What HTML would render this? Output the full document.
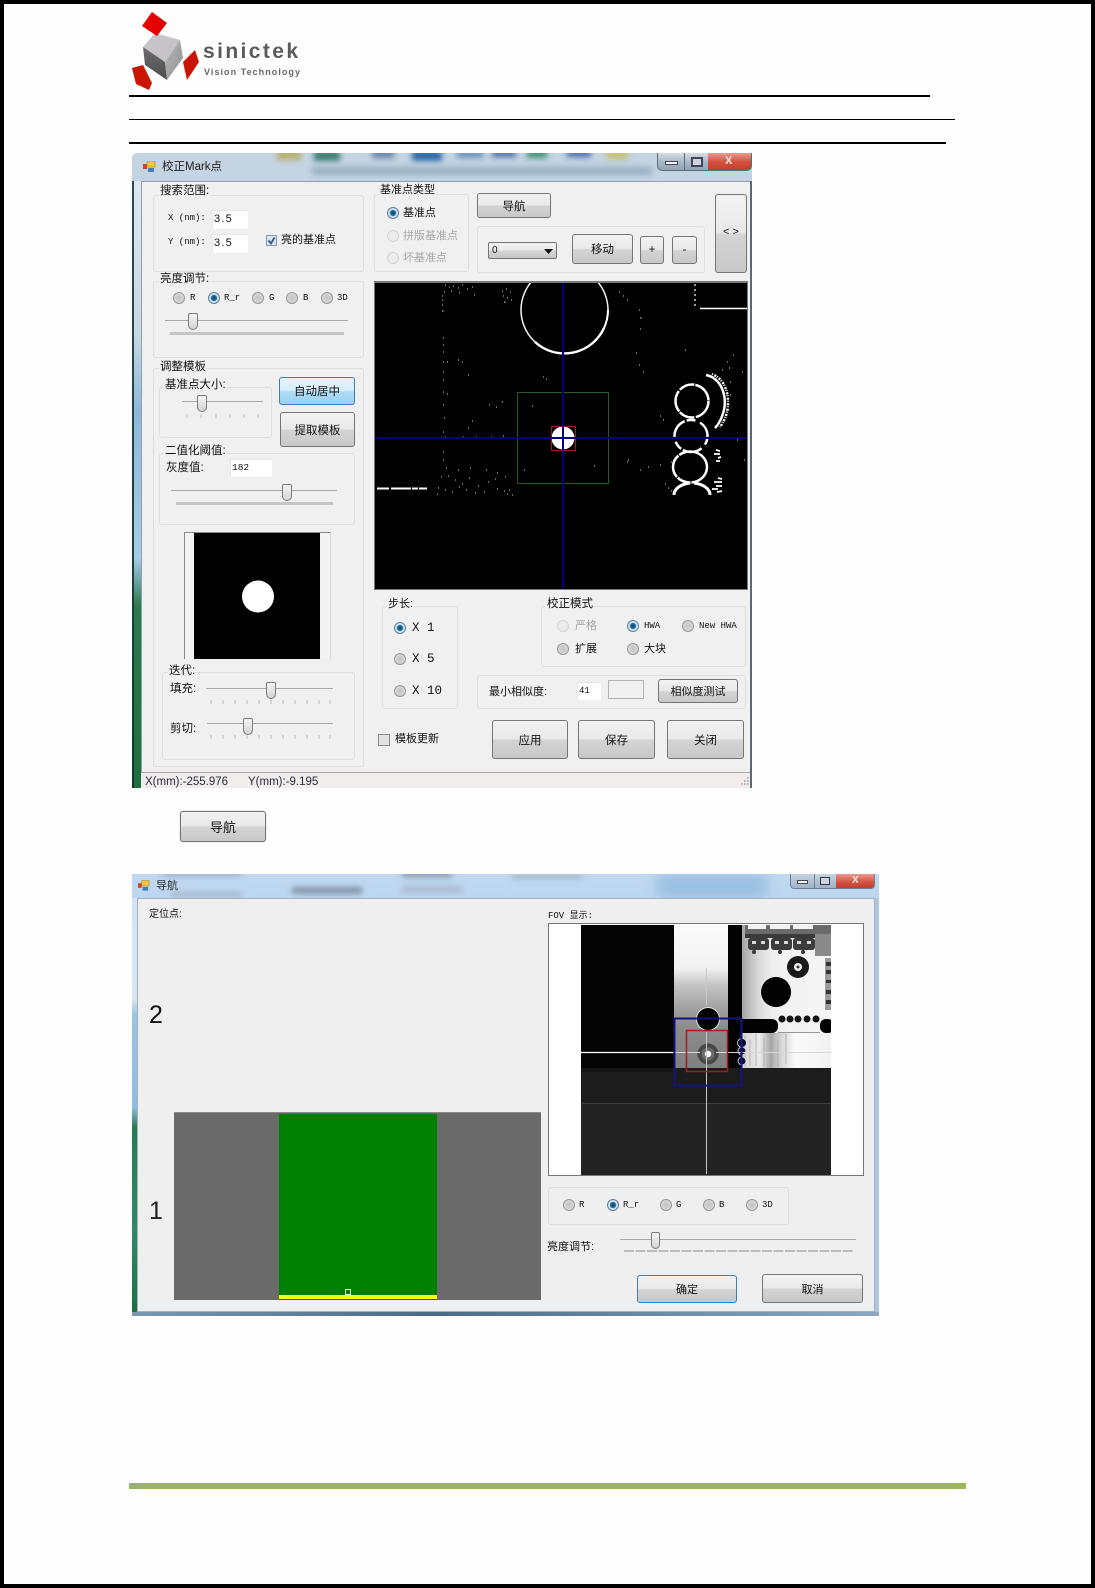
<!DOCTYPE html>
<html lang="zh-CN">
<head>
<meta charset="utf-8">
<title>校正Mark点</title>
<style>
html,body{margin:0;padding:0;background:#fff}
#p{position:relative;width:1095px;height:1588px;overflow:hidden;background:#fefefe;font-family:"Liberation Sans","Noto Sans CJK SC",sans-serif}
#p div,#p span,#p svg{position:absolute;box-sizing:border-box}
.l{background:#000}
.t{font-size:11px;line-height:14px;color:#111;white-space:nowrap}
.m{font-family:"Liberation Mono","Noto Sans CJK SC",monospace;font-size:9px;line-height:14px;color:#111;white-space:nowrap}
.dis{color:#a8a8a8}
.g{border:1px solid #dedede;border-radius:3px;background:#f0f0f0}
.lb{font-size:11px;line-height:13px;color:#111;background:#f0f0f0;white-space:nowrap;padding:0 1px}
.b{display:flex;align-items:center;justify-content:center;border:1px solid #757575;border-radius:3px;background:linear-gradient(#f2f2f2 0,#e9e9e9 48%,#d4d4d4 52%,#c8c8c8 100%);font-size:11.5px;color:#111}
.bl{border-color:#3c7fb1;background:linear-gradient(#e6f4fc 0,#d6edfa 48%,#aedcf5 52%,#9dd0ee 100%)}
.r{width:12px;height:12px;border-radius:50%;border:1px solid #979797;background:radial-gradient(circle at 50% 50%,#c4c4c4 0,#d2d2d2 55%,#f0f0f0 100%)}
.r.on{border-color:#5c7f9c;background:radial-gradient(circle at 50% 50%,#134a70 0,#1f6a9a 38%,#c8dcea 48%,#eef4f8 100%)}
.r.d{border-color:#d2d2d2;background:#ececec}
.i{background:#fff;border-top:1px solid #e4e4e4;border-left:1px solid #e8e8e8}
.th{width:10px;height:17px;border:1px solid #7c7c7c;border-radius:2px 2px 5px 5px;background:linear-gradient(#f4f4f4,#d4d4d4)}
.bar{background:#c6c6c6;height:3px}
.trk{background:#a8a8a8;height:1px}
</style>
</head>
<body>
<div id="p">

<!-- page border -->
<div style="left:0;top:0;width:1095px;height:4px;background:#000"></div>
<div style="left:0;top:1584px;width:1095px;height:4px;background:#000"></div>
<div style="left:0;top:0;width:4px;height:1588px;background:#000"></div>
<div style="left:1091px;top:0;width:4px;height:1588px;background:#000"></div>

<!-- logo -->
<svg style="left:125px;top:8px" width="85" height="90" viewBox="125 8 85 90">
<defs>
<linearGradient id="rt" x1="0" y1="0" x2="1" y2="1"><stop offset="0" stop-color="#f40000"/><stop offset="1" stop-color="#d80000"/></linearGradient>
<linearGradient id="lf" x1="0" y1="0" x2="0" y2="1"><stop offset="0" stop-color="#6e6e6e"/><stop offset="1" stop-color="#4c4c4c"/></linearGradient>
<linearGradient id="rf" x1="0" y1="0" x2="1" y2="1"><stop offset="0" stop-color="#b8b8b8"/><stop offset="1" stop-color="#909090"/></linearGradient>
</defs>
<polygon points="155,33 180,40 165,62 143,47" fill="#c6c4c6"/>
<polygon points="143,47 165,62 167,80 145,65" fill="url(#lf)"/>
<polygon points="165,62 180,40 183,58 167,80" fill="url(#rf)"/>
<polygon points="152,12 167,23 157,36 142,26" fill="url(#rt)"/>
<polygon points="132,68 143,65 152,83 149,90 136,84" fill="#c81600"/>
<polygon points="183,62 195,50 199,62 187,80" fill="#c81600"/>
</svg>
<span style="left:203px;top:38px;font-size:21px;line-height:28px;font-weight:bold;letter-spacing:2.4px;color:#5a5a5a;white-space:nowrap">sinictek</span>
<span style="left:204px;top:66px;font-size:9px;line-height:12px;font-weight:bold;letter-spacing:1.05px;color:#666;white-space:nowrap">Vision Technology</span>

<!-- header rules -->
<div class="l" style="left:129px;top:95px;width:801px;height:2px"></div>
<div class="l" style="left:129px;top:119px;width:826px;height:1px"></div>
<div class="l" style="left:129px;top:142px;width:817px;height:2px"></div>

<!-- ============ WINDOW 1 ============ -->
<div style="left:132px;top:153px;width:620px;height:635px;border-radius:5px 5px 0 0;overflow:hidden;background:linear-gradient(#c4d4e2,#b8cddf 40%,#a9c5dc)">
  <div style="left:145px;top:-3px;width:24px;height:10px;background:#b8b070;filter:blur(3px)"></div>
  <div style="left:182px;top:-3px;width:26px;height:11px;background:#3f8070;filter:blur(3px)"></div>
  <div style="left:240px;top:-3px;width:22px;height:8px;background:#6880a8;filter:blur(3px)"></div>
  <div style="left:280px;top:-3px;width:30px;height:11px;background:#2f6aa4;filter:blur(3px)"></div>
  <div style="left:325px;top:-3px;width:26px;height:8px;background:#6a90b8;filter:blur(3px)"></div>
  <div style="left:360px;top:-3px;width:24px;height:7px;background:#4a6ca0;filter:blur(3px)"></div>
  <div style="left:395px;top:-3px;width:20px;height:8px;background:#3c9070;filter:blur(3px)"></div>
  <div style="left:435px;top:-3px;width:24px;height:7px;background:#4468a8;filter:blur(3px)"></div>
  <div style="left:474px;top:-3px;width:22px;height:9px;background:#c8c078;filter:blur(3px)"></div>
  <div style="left:180px;top:14px;width:340px;height:8px;background:#9ab0c4;filter:blur(3px)"></div>
</div>
<div style="left:132px;top:181px;width:2px;height:607px;background:linear-gradient(#2c4a55,#0d3a2c)"></div>
<div style="left:134px;top:181px;width:7px;height:607px;background:linear-gradient(#dde8f0 0,#c8d8e4 25%,#8fb8d8 38%,#a8cce8 62%,#2b7a50 70%,#1e6e40 100%)"></div>
<div style="left:141px;top:181px;width:609px;height:591px;background:#f0f0f0;border-top:1px solid #8f9fac;border-left:1px solid #8f9fac"></div>
<div style="left:750px;top:181px;width:2px;height:607px;background:#5a6a70"></div>
<div style="left:141px;top:772px;width:609px;height:16px;background:#f1eded;border-top:1px solid #a8a8a8"></div>

<!-- title 1 -->
<svg style="left:143px;top:161px" width="13" height="12" viewBox="0 0 13 12"><rect x="0" y="3" width="4" height="5" fill="#d0402c"/><rect x="4" y="0" width="8" height="6" fill="#f0c840" stroke="#a88828" stroke-width=".6"/><rect x="5" y="7" width="6" height="4" fill="#4c7cc0"/></svg>
<span class="t" style="left:162px;top:160px;font-size:11.5px;color:#222">校正Mark点</span>

<!-- window controls 1 -->
<div style="left:657px;top:153px;width:95px;height:18px;border:1px solid #5c6c78;border-top:0;border-radius:0 0 5px 5px;overflow:hidden;background:linear-gradient(#d4dde6,#a8bac8 50%,#8da4b6)">
  <div style="left:26px;top:0;width:1px;height:18px;background:#5c6c78"></div>
  <div style="left:50px;top:0;width:44px;height:18px;background:linear-gradient(#e89a90,#d4503e 50%,#c0392c)"></div>
  <div style="left:7px;top:8px;width:13px;height:4px;background:#f4f4f4;border:1px solid #445"></div>
  <div style="left:33px;top:4px;width:12px;height:10px;border:2px solid #445;background:#cdd6e0"></div>
  <span style="left:67px;top:1px;font-size:11px;line-height:14px;font-weight:bold;color:#f4ece4">X</span>
</div>

<!-- 搜索范围 -->
<div class="g" style="left:153px;top:195px;width:211px;height:77px"></div>
<span class="lb" style="left:159px;top:185px;font-size:11.5px">搜索范围:</span>
<span class="m" style="left:168px;top:211px">X (nm):</span>
<span class="m" style="left:168px;top:235px">Y (nm):</span>
<div class="i" style="left:212px;top:210px;width:36px;height:19px"></div>
<div class="i" style="left:212px;top:234px;width:36px;height:19px"></div>
<span class="t" style="left:214px;top:212px;font-size:11px;letter-spacing:1.2px">3.5</span>
<span class="t" style="left:214px;top:236px;font-size:11px;letter-spacing:1.2px">3.5</span>
<div style="left:266px;top:235px;width:11px;height:11px;border:1px solid #8a9aa8;background:#d8e4ee"></div>
<svg style="left:266px;top:235px" width="11" height="11" viewBox="0 0 11 11"><path d="M2.5 5.5 5 8.5 8.5 2.5" fill="none" stroke="#33558a" stroke-width="1.8"/></svg>
<span class="t" style="left:281px;top:233px">亮的基准点</span>

<!-- 基准点类型 -->
<div class="g" style="left:374px;top:194px;width:95px;height:78px"></div>
<span class="lb" style="left:379px;top:184px">基准点类型</span>
<div class="r on" style="left:387px;top:207px"></div>
<div class="r d" style="left:387px;top:230px"></div>
<div class="r d" style="left:387px;top:252px"></div>
<span class="t" style="left:403px;top:206px">基准点</span>
<span class="t dis" style="left:403px;top:229px">拼版基准点</span>
<span class="t dis" style="left:403px;top:251px">坏基准点</span>

<!-- nav & move -->
<div class="b" style="left:477px;top:193px;width:74px;height:25px">导航</div>
<div class="g" style="left:477px;top:226px;width:228px;height:47px"></div>
<div class="b" style="left:488px;top:242px;width:69px;height:17px;justify-content:flex-start;padding-left:3px;border-radius:2px;font-size:10px">0</div>
<svg style="left:544px;top:249px" width="9" height="5" viewBox="0 0 9 5"><path d="M0 0H9L4.500 5Z" fill="#111"/></svg>
<div class="b" style="left:572px;top:234px;width:61px;height:30px">移动</div>
<div class="b" style="left:640px;top:236px;width:24px;height:28px">+</div>
<div class="b" style="left:672px;top:236px;width:25px;height:28px">-</div>
<div class="b" style="left:715px;top:194px;width:32px;height:79px;font-size:11px;padding-bottom:4px">&lt; &gt;</div>

<!-- 亮度调节 -->
<div class="g" style="left:153px;top:281px;width:211px;height:77px"></div>
<span class="lb" style="left:159px;top:273px;font-size:11.5px">亮度调节:</span>
<div class="r" style="left:173px;top:292px"></div>
<div class="r on" style="left:208px;top:292px"></div>
<div class="r" style="left:252px;top:292px"></div>
<div class="r" style="left:286px;top:292px"></div>
<div class="r" style="left:321px;top:292px"></div>
<span class="m" style="left:190px;top:291px">R</span>
<span class="m" style="left:224px;top:291px">R_r</span>
<span class="m" style="left:269px;top:291px">G</span>
<span class="m" style="left:303px;top:291px">B</span>
<span class="m" style="left:337px;top:291px">3D</span>
<div class="trk" style="left:165px;top:320px;width:183px"></div>
<div class="bar" style="left:170px;top:332px;width:174px"></div>
<div class="th" style="left:188px;top:313px"></div>

<!-- 调整模板 -->
<div class="g" style="left:153px;top:368px;width:211px;height:399px"></div>
<span class="lb" style="left:159px;top:361px;font-size:11.5px">调整模板</span>
<div class="g" style="left:159px;top:387px;width:113px;height:51px"></div>
<span class="lb" style="left:164px;top:379px;font-size:11.5px">基准点大小:</span>
<div class="trk" style="left:182px;top:401px;width:81px"></div>
<div class="th" style="left:197px;top:395px"></div>
<div class="b bl" style="left:279px;top:377px;width:76px;height:28px">自动居中</div>
<div class="b" style="left:280px;top:412px;width:75px;height:35px">提取模板</div>

<div class="g" style="left:159px;top:453px;width:196px;height:72px"></div>
<span class="lb" style="left:164px;top:445px;font-size:11.5px">二值化阈值:</span>
<span class="t" style="left:166px;top:461px;font-size:11.5px">灰度值:</span>
<div class="i" style="left:230px;top:459px;width:42px;height:18px"></div>
<span class="m" style="left:232px;top:461px;font-size:9.5px">182</span>
<div class="trk" style="left:171px;top:490px;width:166px"></div>
<div class="bar" style="left:176px;top:502px;width:157px"></div>
<div class="th" style="left:282px;top:484px"></div>

<!-- template preview -->
<div style="left:184px;top:532px;width:147px;height:127px;background:#f3f3f3;border-top:1px solid #8a8a8a;border-left:1px solid #8a8a8a;border-right:1px solid #d8d8d8"></div>
<svg style="left:194px;top:533px" width="126" height="126" viewBox="194 533 126 126">
<rect x="194" y="533" width="126" height="126" fill="#000"/>
<circle cx="258" cy="596.500" r="16" fill="#fff"/>
</svg>

<!-- 迭代 -->
<div class="g" style="left:162px;top:672px;width:193px;height:88px"></div>
<span class="lb" style="left:168px;top:665px;font-size:11.5px">迭代:</span>
<span class="t" style="left:170px;top:682px;font-size:11.5px">填充:</span>
<span class="t" style="left:170px;top:722px;font-size:11.5px">剪切:</span>
<div class="trk" style="left:206px;top:688px;width:127px"></div>
<div class="trk" style="left:207px;top:723px;width:126px"></div>
<svg style="left:150px;top:400px" width="200" height="350" viewBox="150 400 200 350">
<path d="M187 414v4M201 414v4M216 414v4M230 414v4M244 414v4M258 414v4M211 700v4M223 700v4M235 700v4M247 700v4M259 700v4M271 700v4M283 700v4M295 700v4M307 700v4M319 700v4M330 700v4M211 735v4M223 735v4M235 735v4M247 735v4M259 735v4M271 735v4M283 735v4M295 735v4M307 735v4M319 735v4M330 735v4" stroke="#bcbcbc" stroke-width="1" fill="none"/>
</svg>
<div class="th" style="left:266px;top:682px"></div>
<div class="th" style="left:243px;top:718px"></div>

<!-- main view -->
<svg style="left:374px;top:281px" width="374" height="309" viewBox="374 281 374 309">
<defs><clipPath id="c1"><rect x="375" y="283" width="372" height="306"/></clipPath></defs>
<rect x="374" y="281" width="374" height="309" fill="#7a7a7a"/>
<rect x="375" y="283" width="372" height="306" fill="#000"/>
<g clip-path="url(#c1)" fill="none">
<circle cx="564.500" cy="310" r="43.500" stroke="#f4f4f4" stroke-width="1.500"/>
<path d="M535 342A43.500 43.500 0 0 0 604 328" stroke="#fff" stroke-width="2.400"/>
<path d="M604 328A43.500 43.500 0 0 0 608 310" stroke="#fff" stroke-width="2"/>
<circle cx="692" cy="401" r="16.500" stroke="#fff" stroke-width="2.500" stroke-dasharray="22 1.500 16 1"/>
<ellipse cx="691" cy="436" rx="16.500" ry="16" stroke="#fff" stroke-width="2.500" stroke-dasharray="9 5 20 2"/>
<ellipse cx="690" cy="467" rx="17" ry="15.500" stroke="#fff" stroke-width="2.500" stroke-dasharray="24 1 14 1"/>
<path d="M674 495C674 488 682 484 690 483" stroke="#fff" stroke-width="3"/>
<path d="M710 495C710 488 702 484 694 483" stroke="#fff" stroke-width="3"/>
<path d="M706 375C721 378 727 395 724 410 722 418 719 424 715 428" stroke="#fff" stroke-width="2.500"/>
<path d="M712 374C727 380 730 398 727 412 726 417 723 423 720 427" stroke="#fff" stroke-width="2.500" stroke-dasharray="1 1.500 2 1"/>
<path d="M377 488.500H427" stroke="#fff" stroke-width="2" stroke-dasharray="12 2 20 1 6 1"/>
<path d="M700 308.500H747" stroke="#fff" stroke-width="1.500"/>
<path d="M695 284V308" stroke="#fff" stroke-width="1.200" stroke-dasharray="2 3"/>
<path opacity=".85" d="M445 285h1M449 287h1M453 286h1M458 288h1M462 285h1M467 289h1M472 287h1M444 292h1M451 291h1M459 293h1M474 295h1M442 296h1M442 300h1M442 305h1M442 311h1.500M502 291h1M506 289h1M510 292h1M503 296h1M507 298h1M504 302h1.500M511 300h1M619 292h1M623 296h1M627 300h1M639 310h1M640 318h1.500M640 329h1M636 353h1M639 365h1M643 372h1M543 377h1M546 379h1M458 360h1M468 375h1M443 338h1M443 345h1M443 352h1M443 362h1M443 372h1M443 380h1M443 392h1M443 405h1M444 418h1M443 432h1M445 437h1M447 362h1M462 362h1M447 394h1M489 405h1M496 407h1M502 402h1M472 421h1M468 428h1M463 437h1M476 437h1M491 437h1M503 436h1M532 406h1M443 452h1M443 460h1M446 468h1M458 470h1M470 468h1M486 470h1M497 473h1M441 477h1M448 476h1M455 480h1M462 484h1M469 478h1M478 486h1M488 482h1M495 479h1M505 477h1M438 488h1M445 490h1M452 492h1M459 487h1M466 490h1M475 493h1M484 492h1M497 489h1M504 491h1M507 494h1M509 490h1M512 495h1M437 494h1M524 470h1M594 466h1M628 460h1M640 470h1M627 462h1M648 467h1M660 465h1M685 350h1M733 355h1M742 372h1M737 440h1M744 460h1M660 416h1M663 420h1M722 370h1M727 362h1M729 368h1M730 382h1M730 395h1M728 410h1M671 462h1M665 484h1M668 488h1M671 491h1" stroke="#fff" stroke-width="1"/>
<path d="M716 450l4 1M714 454l6 0M718 458l3-1M716 461l4 0M718 478l4 1M714 482l8 0M716 486l6 0M712 489l6 0M717 492l5-1" stroke="#fff" stroke-width="1.800"/>
<circle cx="563" cy="438" r="11.500" fill="#fff"/>
<rect x="517.500" y="392.500" width="91" height="91" stroke="#245c24" stroke-width="1"/>
<rect x="551.500" y="426.500" width="24" height="24" stroke="#a01c20" stroke-width="1"/>
<path d="M563 283V589" stroke="#000080" stroke-width="2"/>
<path d="M375 438H747" stroke="#000080" stroke-width="2"/>
</g>
</svg>

<!-- 步长 -->
<div class="g" style="left:382px;top:606px;width:76px;height:103px"></div>
<span class="lb" style="left:387px;top:598px">步长:</span>
<div class="r on" style="left:394px;top:622px"></div>
<div class="r" style="left:394px;top:653px"></div>
<div class="r" style="left:394px;top:685px"></div>
<span class="m" style="left:412px;top:621px;font-size:12.500px">X 1</span>
<span class="m" style="left:412px;top:652px;font-size:12.500px">X 5</span>
<span class="m" style="left:412px;top:684px;font-size:12.500px">X 10</span>

<!-- 校正模式 -->
<div class="g" style="left:541px;top:606px;width:205px;height:61px"></div>
<span class="lb" style="left:546px;top:598px;font-size:11.5px">校正模式</span>
<div class="r d" style="left:557px;top:620px"></div>
<div class="r on" style="left:627px;top:620px"></div>
<div class="r" style="left:682px;top:620px"></div>
<div class="r" style="left:557px;top:643px"></div>
<div class="r" style="left:627px;top:643px"></div>
<span class="t dis" style="left:575px;top:619px">严格</span>
<span class="m" style="left:644px;top:619px">HWA</span>
<span class="m" style="left:699px;top:619px">New HWA</span>
<span class="t" style="left:575px;top:642px">扩展</span>
<span class="t" style="left:644px;top:642px">大块</span>

<!-- 最小相似度 -->
<div class="g" style="left:477px;top:675px;width:269px;height:34px"></div>
<span class="t" style="left:489px;top:685px">最小相似度:</span>
<div class="i" style="left:577px;top:682px;width:24px;height:18px"></div>
<span class="m" style="left:579px;top:684px">41</span>
<div style="left:608px;top:680px;width:36px;height:19px;border:1px solid #b4b4b4;background:#f0f0f0"></div>
<div class="b" style="left:658px;top:679px;width:80px;height:24px;font-size:11px">相似度测试</div>

<div style="left:378px;top:734px;width:12px;height:12px;border:1px solid #8a8a8a;background:#e2e2e2"></div>
<span class="t" style="left:395px;top:732px">模板更新</span>
<div class="b" style="left:492px;top:720px;width:76px;height:39px">应用</div>
<div class="b" style="left:578px;top:720px;width:77px;height:39px">保存</div>
<div class="b" style="left:667px;top:720px;width:77px;height:39px">关闭</div>

<!-- status -->
<span style="left:145px;top:775px;font-size:11.500px;line-height:15px;color:#2a2a3a;white-space:nowrap">X(mm):-255.976</span>
<span style="left:248px;top:775px;font-size:11.500px;line-height:15px;color:#2a2a3a;white-space:nowrap">Y(mm):-9.195</span>
<svg style="left:738px;top:776px" width="12" height="12" viewBox="0 0 12 12"><path d="M9 2h1.500M6 5h1.500M9 5h1.500M3 8h1.500M6 8h1.500M9 8h1.500" stroke="#9a9a9a" stroke-width="1.500"/></svg>

<!-- standalone nav button -->
<div class="b" style="left:180px;top:811px;width:86px;height:31px;font-size:13px;box-shadow:0 0 0 1px #eee">导航</div>

<!-- ============ WINDOW 2 ============ -->
<div style="left:132px;top:874px;width:747px;height:442px;overflow:hidden;background:linear-gradient(#c0d8f0,#aecdec 30%,#a8cbea)">
  <div style="left:30px;top:-3px;width:80px;height:5px;background:#9aacc0;filter:blur(3px)"></div>
  <div style="left:40px;top:18px;width:70px;height:5px;background:#a4b6ca;filter:blur(3px)"></div>
  <div style="left:160px;top:13px;width:70px;height:7px;background:#8494a8;filter:blur(3px)"></div>
  <div style="left:270px;top:-3px;width:50px;height:6px;background:#8898ac;filter:blur(3px)"></div>
  <div style="left:270px;top:12px;width:60px;height:7px;background:#aabcd2;filter:blur(3px)"></div>
  <div style="left:380px;top:0;width:70px;height:5px;background:#a4b8ce;filter:blur(3px)"></div>
  <div style="left:525px;top:0;width:110px;height:24px;background:#9bc0e2;filter:blur(6px)"></div>
</div>
<div style="left:132px;top:898px;width:5px;height:418px;background:linear-gradient(#d4e4f4 0,#d8e6f4 24%,#9cc4e8 28%,#8fbce4 50%,#2a7a50 55%,#2f8a68 80%,#1e6e40 100%)"></div>
<div style="left:875px;top:898px;width:4px;height:418px;background:#a8c8e4"></div>
<div style="left:132px;top:1312px;width:747px;height:4px;background:linear-gradient(90deg,#7a98b4,#4a6a8a 40%,#6a8aaa 70%,#8aa8c4)"></div>
<div style="left:137px;top:898px;width:738px;height:414px;background:#efefef;border:1px solid #a4b0bc"></div>

<svg style="left:138px;top:880px" width="12" height="12" viewBox="0 0 13 12"><rect x="0" y="3" width="4" height="5" fill="#d0402c"/><rect x="4" y="0" width="8" height="6" fill="#f0c840" stroke="#a88828" stroke-width=".6"/><rect x="5" y="7" width="6" height="4" fill="#4c7cc0"/></svg>
<span class="t" style="left:156px;top:879px;color:#2a2a2a">导航</span>

<!-- controls 2 -->
<div style="left:790px;top:874px;width:85px;height:15px;border:1px solid #6f8296;border-top:0;border-radius:0 0 4px 4px;overflow:hidden;background:linear-gradient(#c6d4e2,#9fb2c6)">
  <div style="left:23px;top:0;width:1px;height:15px;background:#6f8296"></div>
  <div style="left:45px;top:0;width:39px;height:15px;background:linear-gradient(#e89a90,#d4503e 55%,#c0392c)"></div>
  <div style="left:6px;top:6px;width:11px;height:4px;background:#f4f4f4;border:1px solid #445"></div>
  <div style="left:29px;top:3px;width:10px;height:8px;border:1px solid #334;background:#cdd6e0"></div>
  <span style="left:61px;top:0;font-size:10px;line-height:13px;font-weight:bold;color:#f4ece4">X</span>
</div>

<span class="t" style="left:149px;top:908px;font-size:10px">定位点:</span>
<span style="left:149px;top:1001px;font-size:25px;line-height:29px;color:#111">2</span>
<span style="left:149px;top:1197px;font-size:25px;line-height:29px;color:#222">1</span>

<!-- location map -->
<div style="left:174px;top:1112px;width:367px;height:188px;background:#6a6a6a;border-top:1px solid #8a8a8a"></div>
<div style="left:279px;top:1114px;width:158px;height:186px;background:#008000"></div>
<div style="left:279px;top:1295px;width:158px;height:4px;background:#ffff10"></div>
<div style="left:345px;top:1289px;width:6px;height:6px;border:1px solid #e8ffe8"></div>

<span class="m" style="left:548px;top:909px;font-size:9px">FOV 显示:</span>

<!-- FOV -->
<div style="left:548px;top:923px;width:316px;height:253px;background:#fff;border:1px solid #777"></div>
<svg style="left:581px;top:925px" width="250" height="250" viewBox="581 925 250 250">
<defs>
<clipPath id="c2"><rect x="581" y="925" width="250" height="250"/></clipPath>
<linearGradient id="metal" x1="0" y1="925" x2="0" y2="1068" gradientUnits="userSpaceOnUse">
<stop offset="0" stop-color="#fbfbfb"/><stop offset=".3" stop-color="#f2f2f2"/><stop offset=".42" stop-color="#c4c4c4"/><stop offset=".58" stop-color="#a2a2a2"/><stop offset=".72" stop-color="#8c8c8c"/><stop offset="1" stop-color="#808080"/>
</linearGradient>
<linearGradient id="rightm" x1="742" y1="0" x2="831" y2="0" gradientUnits="userSpaceOnUse">
<stop offset="0" stop-color="#a4a4a4"/><stop offset=".18" stop-color="#d8d8d8"/><stop offset=".35" stop-color="#f0f0f0"/><stop offset="1" stop-color="#f6f6f6"/>
</linearGradient>
<linearGradient id="lowm" x1="742" y1="0" x2="831" y2="0" gradientUnits="userSpaceOnUse">
<stop offset="0" stop-color="#d4d4d4"/><stop offset=".2" stop-color="#eaeaea"/><stop offset=".32" stop-color="#a8a8a8"/><stop offset=".45" stop-color="#d8d8d8"/><stop offset=".6" stop-color="#fafafa"/><stop offset="1" stop-color="#f2f2f2"/>
</linearGradient>
</defs>
<g clip-path="url(#c2)">
<rect x="581" y="925" width="250" height="143" fill="#040404"/>
<rect x="581" y="1068" width="250" height="36" fill="#1c1c1c"/>
<rect x="581" y="1104" width="250" height="71" fill="#232323"/>
<path d="M581 1103.500H831" stroke="#3c3c3c" stroke-width="1"/>
<rect x="581" y="1068" width="93" height="4" fill="#141414"/>
<rect x="674" y="925" width="54" height="143" fill="url(#metal)"/>
<rect x="742" y="925" width="89" height="108" fill="url(#rightm)"/>
<rect x="742" y="1033" width="89" height="35" fill="url(#lowm)"/>
<path d="M745 1036v30M750 1040v26M756 1034v32M764 1038v28M772 1036v30M778 1040v26M786 1034v30" stroke="#9a9a9a" stroke-width="1" opacity=".6"/>
<!-- top right detail -->
<rect x="745" y="925" width="86" height="9" fill="#6a6a6a"/>
<path d="M748 925h18v4h-18zM770 925h20v4h-20zM793 925h20v4h-20z" fill="#f2f2f2"/>
<rect x="745" y="934" width="80" height="4" fill="#3a3a3a"/>
<rect x="815" y="934" width="16" height="22" fill="#8a8a8a"/>
<rect x="748" y="938" width="21" height="12" rx="3" fill="#3c3c3c"/>
<rect x="771" y="938" width="21" height="12" rx="3" fill="#3c3c3c"/>
<rect x="793" y="938" width="22" height="12" rx="3" fill="#3c3c3c"/>
<path d="M752 941h4v3h-4zM761 941h4v3h-4zM775 941h4v3h-4zM784 941h4v3h-4zM797 941h4v3h-4zM807 941h4v3h-4z" fill="#dadada"/>
<circle cx="754" cy="952" r="2" fill="#333"/><circle cx="780" cy="952" r="2" fill="#333"/><circle cx="803" cy="952" r="2" fill="#333"/>
<rect x="825" y="958" width="6" height="52" fill="#9a9a9a"/>
<path d="M826 962h5v4h-5zM826 970h5v4h-5zM826 980h5v3h-5zM826 990h5v4h-5zM826 1000h5v4h-5z" fill="#333"/>
<!-- ring -->
<circle cx="798" cy="967" r="11" fill="#1a1a1a"/>
<circle cx="798" cy="967" r="4" fill="#f4f4f4"/>
<circle cx="798" cy="967" r="1.500" fill="#333"/>
<!-- big hole -->
<circle cx="776" cy="992" r="16" fill="#e8e8e8"/>
<circle cx="776" cy="992" r="15" fill="#020202"/>
<!-- slot -->
<path d="M728 925H742V1033L740 1040H734Q728 1038 728 1030Z" fill="#030303"/>
<rect x="742" y="1019" width="36" height="14" rx="6" fill="#030303"/>
<rect x="738" y="1019" width="10" height="14" fill="#030303"/>
<circle cx="782" cy="1019" r="3.500" fill="#111"/><circle cx="790" cy="1019" r="3.500" fill="#111"/><circle cx="798" cy="1019" r="3.500" fill="#111"/><circle cx="807" cy="1019" r="3.500" fill="#111"/><circle cx="816" cy="1019" r="3.500" fill="#111"/>
<rect x="820" y="1019" width="14" height="14" rx="6" fill="#030303"/>
<path d="M778 1032.500H820" stroke="#999" stroke-width="1"/>
<!-- hole on column -->
<circle cx="708" cy="1019" r="12" fill="#e0e0e0"/>
<circle cx="708" cy="1019" r="11" fill="#020202"/>
<!-- mark -->
<circle cx="708" cy="1054" r="10.500" fill="#484848"/>
<circle cx="708" cy="1054" r="6.500" fill="#6a6a6a"/>
<circle cx="708" cy="1054" r="3.200" fill="#fff"/>
<!-- vias -->
<circle cx="742" cy="1043" r="4.500" fill="#0a0a2a" stroke="#e8e8e8" stroke-width=".8"/>
<circle cx="742" cy="1051" r="4" fill="#0a0a2a" stroke="#e8e8e8" stroke-width=".8"/>
<circle cx="742" cy="1061" r="4" fill="#0a0a2a" stroke="#e8e8e8" stroke-width=".8"/>
<!-- crosshair -->
<path d="M581 1052.500H674" stroke="#fff" stroke-width="1.200"/>
<path d="M674 1052.500H700M716 1052.500H831" stroke="#d8d8d8" stroke-width="1"/>
<path d="M706.500 968V1005M706.500 1032V1174" stroke="#c8c8c8" stroke-width="1"/>
<!-- rects -->
<rect x="674.500" y="1018.500" width="67" height="67" fill="none" stroke="#14147c" stroke-width="2"/>
<rect x="686.500" y="1030.500" width="41" height="41" fill="none" stroke="#a41c1c" stroke-width="1.500"/>
</g>
</svg>

<!-- radio row -->
<div class="g" style="left:548px;top:1187px;width:241px;height:38px;background:#efefef"></div>
<div class="r" style="left:563px;top:1199px"></div>
<div class="r on" style="left:607px;top:1199px"></div>
<div class="r" style="left:660px;top:1199px"></div>
<div class="r" style="left:703px;top:1199px"></div>
<div class="r" style="left:746px;top:1199px"></div>
<span class="m" style="left:579px;top:1198px">R</span>
<span class="m" style="left:623px;top:1198px">R_r</span>
<span class="m" style="left:676px;top:1198px">G</span>
<span class="m" style="left:719px;top:1198px">B</span>
<span class="m" style="left:762px;top:1198px">3D</span>

<span class="t" style="left:547px;top:1240px">亮度调节:</span>
<div class="trk" style="left:620px;top:1239px;width:236px"></div>
<svg style="left:620px;top:1249px" width="240" height="4" viewBox="620 1249 240 4"><path d="M624 1251H853" stroke="#bcbcbc" stroke-width="2" stroke-dasharray="10 1.500"/></svg>
<div class="th" style="left:651px;top:1232px;width:9px"></div>

<div class="b" style="left:637px;top:1275px;width:100px;height:28px;border-color:#3c7fb1;border-width:1.500px;font-size:11px">确定</div>
<div class="b" style="left:762px;top:1274px;width:101px;height:29px;font-size:11px">取消</div>

<!-- footer rule -->
<div style="left:129px;top:1483px;width:837px;height:6px;background:#9bb858"></div>

</div>
</body>
</html>
